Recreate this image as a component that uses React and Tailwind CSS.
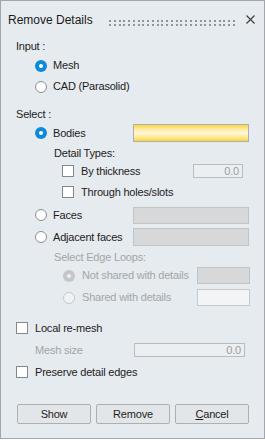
import React from "react";

function Radio({ checked, disabled }) {
  if (checked && !disabled)
    return (
      <span className="w-[12px] h-[12px] shrink-0 rounded-full bg-[#0d8bd6] flex items-center justify-center">
        <span className="w-[4px] h-[4px] rounded-full bg-white" />
      </span>
    );
  if (checked && disabled)
    return (
      <span className="w-[12px] h-[12px] shrink-0 rounded-full bg-[#c4c6c8] flex items-center justify-center">
        <span className="w-[4px] h-[4px] rounded-full bg-[#eef0f1]" />
      </span>
    );
  if (disabled)
    return <span className="w-[12px] h-[12px] shrink-0 rounded-full bg-[#f1f2f3] border border-[#c6c8ca]" />;
  return <span className="w-[12px] h-[12px] shrink-0 rounded-full bg-white border border-[#8c8f92]" />;
}

function Check() {
  return <span className="w-[12px] h-[12px] shrink-0 bg-white border border-[#858789]" />;
}

function Btn({ children }) {
  return (
    <div className="w-[74px] h-[20px] flex items-center justify-center rounded-[2px] border border-[#adb0b3] bg-[#e3e6e9] text-[#1c1c1c]">
      {children}
    </div>
  );
}

export default function App() {
  const dots = Array.from({ length: 27 });
  return (
    <div className="w-[265px] h-[439px] border border-[#a3a7ab] bg-[#e6ebef] flex flex-col text-[11px] tracking-[-0.2px] text-[#1c1c1c] font-['Liberation_Sans',Arial,sans-serif] leading-none">
      {/* Title */}
      <div className="mt-[8px] h-[21px] flex items-center pl-[7px]">
        <span className="w-[101px] text-[12px] tracking-normal text-[#1a1a1a]">Remove Details</span>
        <div className="w-[126px] h-[6px] flex flex-col justify-between mt-[7px]">
          <div className="flex justify-between">
            {dots.map((_, i) => (
              <span key={i} className="w-[2px] h-[2px] bg-[#90959a]" />
            ))}
          </div>
          <div className="flex justify-between">
            {dots.map((_, i) => (
              <span key={i} className="w-[2px] h-[2px] bg-[#90959a]" />
            ))}
          </div>
        </div>
        <svg className="ml-[11px]" width="9" height="9" viewBox="0 0 9 9">
          <path d="M0.5 0.5 L8.5 8.5 M8.5 0.5 L0.5 8.5" stroke="#3a3a3a" strokeWidth="1.1" />
        </svg>
      </div>

      {/* Input */}
      <div className="mt-[8px] h-[17px] flex items-center pl-[15px]">Input :</div>
      <div className="mt-[2px] h-[17px] flex items-center pl-[34px]">
        <Radio checked />
        <span className="ml-[6px]">Mesh</span>
      </div>
      <div className="mt-[4px] h-[17px] flex items-center pl-[34px]">
        <Radio />
        <span className="ml-[6px]">CAD (Parasolid)</span>
      </div>

      {/* Select */}
      <div className="mt-[11px] h-[17px] flex items-center pl-[15px]">Select :</div>
      <div className="mt-[1px] h-[18px] flex items-center pl-[34px]">
        <Radio checked />
        <span className="ml-[6px] w-[80px]">Bodies</span>
        <div className="w-[116px] h-[18px] border border-[#a8b0b8] bg-[linear-gradient(to_bottom,#ffd53a_0%,#ffeaa0_25%,#fff6d8_50%,#ffec9c_75%,#ffd436_100%)]" />
      </div>
      <div className="mt-[3px] h-[17px] flex items-center pl-[53px]">Detail Types:</div>
      <div className="mt-[2px] h-[14px] flex items-center pl-[61px]">
        <Check />
        <span className="ml-[7px] w-[112px]">By thickness</span>
        <div className="w-[50px] h-[14px] border border-[#babdc0] bg-[#eceff1] flex items-center justify-end pr-[3px] text-[#9a9c9e]">
          0.0
        </div>
      </div>
      <div className="mt-[7px] h-[14px] flex items-center pl-[61px]">
        <Check />
        <span className="ml-[7px]">Through holes/slots</span>
      </div>
      <div className="mt-[7px] h-[18px] flex items-center pl-[34px]">
        <Radio />
        <span className="ml-[6px] w-[80px]">Faces</span>
        <div className="w-[116px] h-[17px] border border-[#c2c4c6] bg-[#d7d8d9]" />
      </div>
      <div className="mt-[4px] h-[18px] flex items-center pl-[34px]">
        <Radio />
        <span className="ml-[6px] w-[80px]">Adjacent faces</span>
        <div className="w-[116px] h-[18px] border border-[#c2c4c6] bg-[#d7d8d9]" />
      </div>
      <div className="mt-[3px] h-[16px] flex items-center pl-[53px] text-[#a3a5a7]">Select Edge Loops:</div>
      <div className="mt-[2px] h-[17px] flex items-center pl-[62px] text-[#a3a5a7]">
        <Radio checked disabled />
        <span className="ml-[7px] w-[115px]">Not shared with details</span>
        <div className="w-[53px] h-[17px] border border-[#c2c4c6] bg-[#d7d8d9]" />
      </div>
      <div className="mt-[5px] h-[17px] flex items-center pl-[62px] text-[#a3a5a7]">
        <Radio disabled />
        <span className="ml-[7px] w-[115px]">Shared with details</span>
        <div className="w-[53px] h-[17px] border border-[#c6c8ca] bg-[#f2f4f5]" />
      </div>

      {/* Local re-mesh */}
      <div className="mt-[14px] h-[16px] flex items-center pl-[15px]">
        <Check />
        <span className="ml-[7px]">Local re-mesh</span>
      </div>
      <div className="mt-[7px] h-[14px] flex items-center pl-[34px] text-[#a3a5a7]">
        <span className="w-[99px]">Mesh size</span>
        <div className="w-[111px] h-[14px] border border-[#babdc0] bg-[#eceff1] flex items-center justify-end pr-[3px] text-[#9a9c9e]">
          0.0
        </div>
      </div>
      <div className="mt-[9px] h-[12px] flex items-center pl-[15px]">
        <Check />
        <span className="ml-[7px]">Preserve detail edges</span>
      </div>

      {/* Buttons */}
      <div className="mt-[26px] h-[20px] flex items-center gap-[5px] pl-[16px]">
        <Btn>Show</Btn>
        <Btn>Remove</Btn>
        <Btn>
          <span>
            <span className="underline underline-offset-[1px]">C</span>ancel
          </span>
        </Btn>
      </div>
    </div>
  );
}
